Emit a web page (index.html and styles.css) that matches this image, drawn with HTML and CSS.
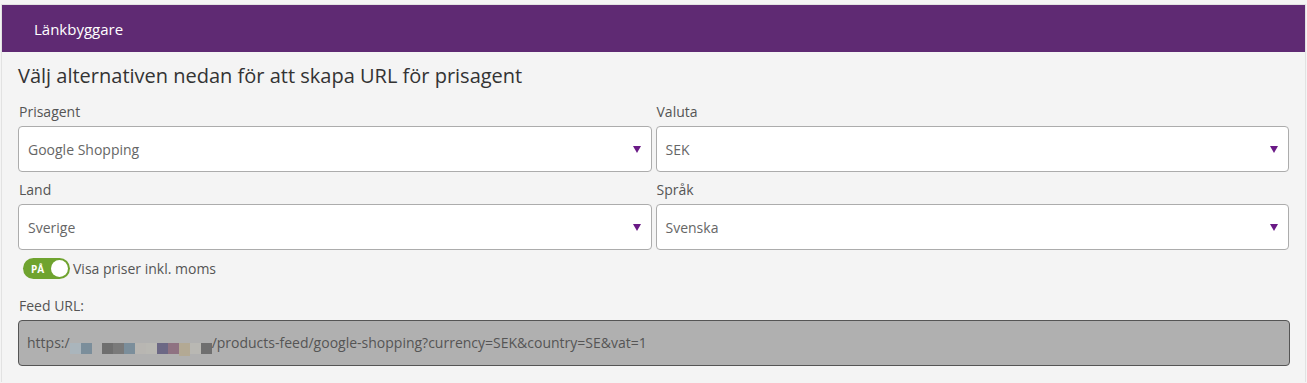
FILE: index.html
```html
<!DOCTYPE html>
<html lang="sv">
<head>
    <meta charset="UTF-8">
    <meta name="viewport" content="width=device-width, initial-scale=1.0">
    <title>Länkbyggare</title>
    <link rel="stylesheet" href="styles.css">
</head>
<body>
    <div class="panel">
        <div class="panel-heading">Länkbyggare</div>
        <div class="panel-body">
            <h2 class="title">Välj alternativen nedan för att skapa URL för prisagent</h2>

            <div class="row">
                <div class="field">
                    <label class="label">Prisagent</label>
                    <div class="select"><span>Google Shopping</span><span class="caret"></span></div>
                </div>
                <div class="field">
                    <label class="label">Valuta</label>
                    <div class="select"><span>SEK</span><span class="caret"></span></div>
                </div>
            </div>

            <div class="row">
                <div class="field">
                    <label class="label">Land</label>
                    <div class="select"><span>Sverige</span><span class="caret"></span></div>
                </div>
                <div class="field">
                    <label class="label">Språk</label>
                    <div class="select"><span>Svenska</span><span class="caret"></span></div>
                </div>
            </div>

            <div class="switch-row">
                <div class="switch">
                    <span class="switch-text">PÅ</span>
                    <span class="knob"></span>
                </div>
                <span class="switch-label">Visa priser inkl. moms</span>
            </div>

            <label class="label">Feed URL:</label>
            <div class="feed-url">
                https:/<span class="blur"><i class="b1"></i><i class="b2"></i><i class="gap"></i><i class="b3"></i><i class="b4"></i><i class="b2"></i><i class="b5"></i><i class="b6"></i><i class="b7"></i><i class="b8"></i><i class="b9"></i><i class="b6"></i><i class="b3"></i></span>/products-feed/google-shopping?currency=SEK&amp;country=SE&amp;vat=1
            </div>
        </div>
    </div>
</body>
</html>
```

FILE: styles.css
```css
body {
    margin: 0;
    background-color: #f4f4f4;
    font-family: "Open Sans", "Liberation Sans", sans-serif;
    font-size: 14px;
    color: #555;
}

.panel {
    margin: 4px 1px 0 1px;
    border: 1px solid #e2e2e2;
    border-bottom: none;
    background-color: #f4f4f4;
}

.panel-heading {
    background-color: #5f2a73;
    color: #fff;
    font-size: 15px;
    height: 47px;
    line-height: 48px;
    padding-left: 32px;
}

.panel-body {
    padding: 10px 16px 16px 16px;
}

.title {
    margin: 0 0 12px 0;
    font-size: 20px;
    font-weight: normal;
    line-height: 28px;
    color: #333;
}

.row {
    display: grid;
    grid-template-columns: 1fr 1fr;
    gap: 4px;
    margin-bottom: 8px;
}

.label {
    display: block;
    line-height: 20px;
    margin-bottom: 4px;
    padding-left: 1px;
}

.select {
    display: flex;
    align-items: center;
    justify-content: space-between;
    height: 44px;
    border: 1px solid #acacac;
    border-radius: 4px;
    background-color: #fff;
    padding: 0 10px 0 9px;
    color: #666;
}

.caret {
    width: 0;
    height: 0;
    border-left: 4px solid transparent;
    border-right: 4px solid transparent;
    border-top: 7px solid #6a1a86;
}

.switch-row {
    display: flex;
    align-items: center;
    margin: 1px 0 17px 5px;
}

.switch {
    display: flex;
    align-items: center;
    justify-content: space-between;
    width: 47px;
    height: 21px;
    border-radius: 11px;
    background-color: #6fa32f;
    box-sizing: border-box;
    padding: 0 2px 0 8px;
}

.switch-text {
    color: #fff;
    font-size: 10px;
    font-weight: bold;
}

.knob {
    width: 17px;
    height: 17px;
    border-radius: 50%;
    background-color: #fff;
}

.switch-label {
    margin-left: 3px;
}

.feed-url {
    height: 44px;
    line-height: 44px;
    border: 1px solid #555;
    border-radius: 4px;
    background-color: #b0b0b0;
    padding-left: 8px;
    margin-right: -1px;
    white-space: nowrap;
}

.blur i {
    display: inline-block;
    width: 11px;
    height: 11px;
    vertical-align: -6px;
}

.blur .gap { width: 10px; }
.blur .b1 { background-color: #aab5bc; }
.blur .b2 { background-color: #7b8e9b; }
.blur .b3 { background-color: #6f6f6f; }
.blur .b4 { background-color: #7a7a7a; }
.blur .b5 { background-color: #b8b6b2; }
.blur .b6 { background-color: #b9b8b3; }
.blur .b7 { background-color: #6c6885; }
.blur .b8 { background-color: #8f7282; }
.blur .b9 { background-color: #b3a994; height: 13px; vertical-align: -8px; }
```
